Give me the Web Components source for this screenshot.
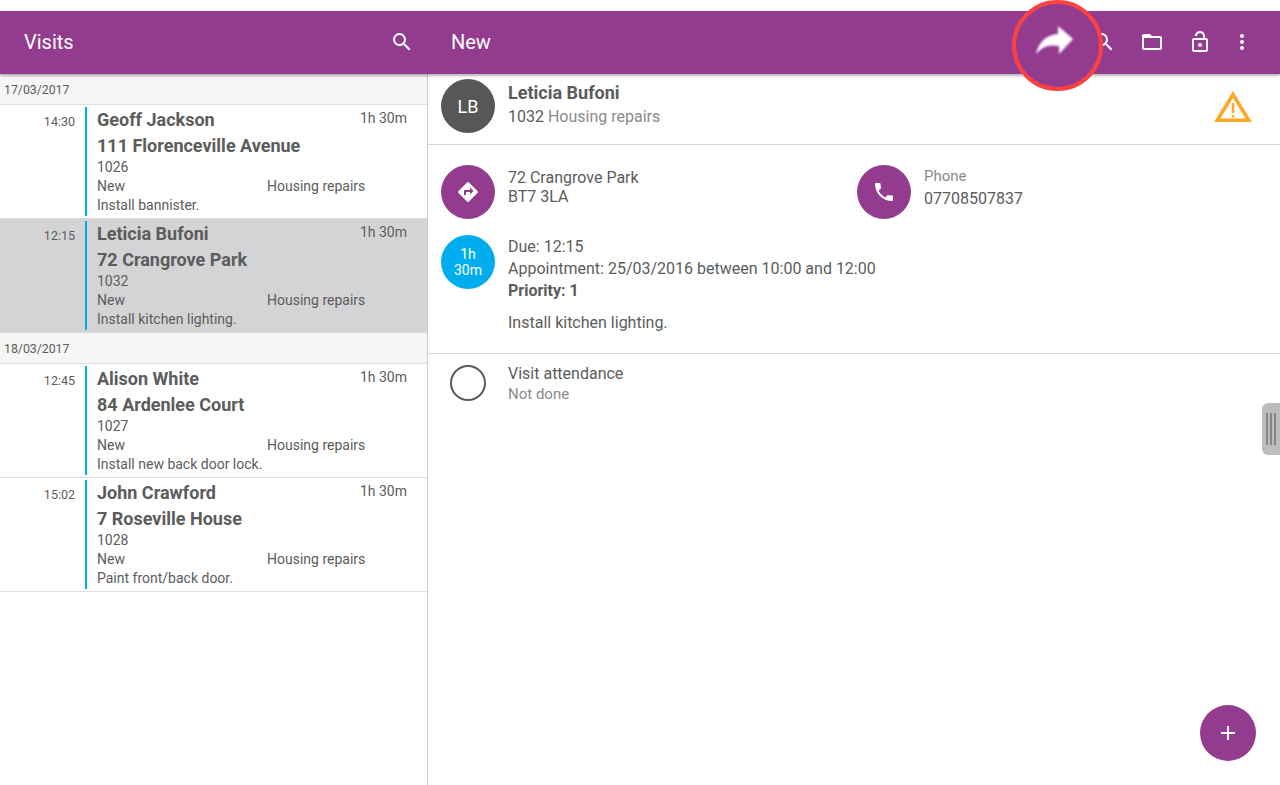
<!DOCTYPE html>
<html>
<head>
<meta charset="utf-8">
<title>Visits</title>
<style>
  html, body { margin: 0; height: 100%; background: #fff; overflow: hidden; }
  body { font-family: Roboto, "Liberation Sans", sans-serif; color: #5c5c5c; }
</style>
</head>
<body>
<visits-app></visits-app>

<script>
const ICONS = {
  search: '<path d="M15.5 14h-.79l-.28-.27A6.47 6.47 0 0 0 16 9.5 6.5 6.5 0 1 0 9.5 16c1.61 0 3.09-.59 4.23-1.57l.27.28v.79l5 4.99L20.49 19l-4.99-5zm-6 0C7.01 14 5 11.99 5 9.5S7.01 5 9.5 5 14 7.01 14 9.5 11.99 14 9.5 14z"/>',
  folder: '<path d="M20 6h-8l-2-2H4c-1.1 0-1.99.9-1.99 2L2 18c0 1.1.9 2 2 2h16c1.1 0 2-.9 2-2V8c0-1.1-.9-2-2-2zm0 12H4V8h16v10z"/>',
  lock: '<path d="M12 17c1.1 0 2-.9 2-2s-.9-2-2-2-2 .9-2 2 .9 2 2 2zm6-9h-1V6c0-2.76-2.24-5-5-5S7 3.24 7 6h1.9c0-1.71 1.39-3.1 3.1-3.1 1.71 0 3.1 1.39 3.1 3.1v2H6c-1.1 0-2 .9-2 2v10c0 1.1.9 2 2 2h12c1.1 0 2-.9 2-2V10c0-1.1-.9-2-2-2zm0 12H6V10h12v10z"/>',
  more: '<path d="M12 8c1.1 0 2-.9 2-2s-.9-2-2-2-2 .9-2 2 .9 2 2 2zm0 2c-1.1 0-2 .9-2 2s.9 2 2 2 2-.9 2-2-.9-2-2-2zm0 6c-1.1 0-2 .9-2 2s.9 2 2 2 2-.9 2-2-.9-2-2-2z"/>',
  directions: '<path d="M21.71 11.29l-9-9a.996.996 0 0 0-1.41 0l-9 9a.996.996 0 0 0 0 1.41l9 9c.39.39 1.02.39 1.41 0l9-9a.996.996 0 0 0 0-1.41zM14 14.5V12h-4v3H8v-4c0-.55.45-1 1-1h5V7.5l3.5 3.5-3.5 3.5z"/>',
  phone: '<path d="M6.62 10.79c1.44 2.83 3.76 5.14 6.59 6.59l2.2-2.2c.27-.27.67-.36 1.02-.24 1.12.37 2.33.57 3.57.57.55 0 1 .45 1 1V20c0 .55-.45 1-1 1-9.39 0-17-7.61-17-17 0-.55.45-1 1-1h3.5c.55 0 1 .45 1 1 0 1.25.2 2.45.57 3.57.11.35.03.74-.25 1.02l-2.2 2.2z"/>',
  add: '<path d="M19 13h-6v6h-2v-6H5v-2h6V5h2v6h6v2z"/>'
};

function icon(name, size) {
  return `<svg width="${size}" height="${size}" viewBox="0 0 24 24" fill="currentColor">${ICONS[name]}</svg>`;
}

class AppBar extends HTMLElement {
  constructor() {
    super();
    this.attachShadow({ mode: "open" }).innerHTML = `
      <style>
        :host { display: flex; position: relative; z-index: 2; height: 63px; margin-top: 11px;
                background: #933b8f; color: #fff; box-shadow: 0 2px 2px rgba(0,0,0,.28); }
        .left { width: 428px; flex: none; display: flex; align-items: center; padding: 0 14px 2px 24px; box-sizing: border-box; }
        .right { flex: 1; display: flex; align-items: center; padding: 0 26px 2px 23px; }
        .title { font-size: 20px; flex: 1; }
        .icons { display: flex; gap: 24px; }
        svg { display: block; }
        .ring { position: absolute; left: 1012px; top: -11px; width: 91px; height: 91px; box-sizing: border-box;
                border: 4px solid #fb4141; border-radius: 50%; background: #933b8f;
                display: flex; align-items: center; justify-content: center; }
        .ring svg { margin: 0 6px 10px 0; filter: blur(.8px); }
      </style>
      <div class="left">
        <span class="title">Visits</span>
        <span style="width:24px">${icon("search", 24)}</span>
      </div>
      <div class="right">
        <span class="title">New</span>
        <span class="icons">
          ${icon("search", 24)}${icon("folder", 24)}${icon("lock", 24)}<span style="margin-left:-6px">${icon("more", 24)}</span>
        </span>
      </div>
      <div class="ring">
        <svg width="37" height="30" viewBox="0 0 37 30"><path fill="#fff" d="M0 28C3 15 11 9 22 8V0l15 13L23 28v-8C12 18 6 21 0 28z"/></svg>
      </div>`;
  }
}

class DateHeader extends HTMLElement {
  constructor() {
    super();
    this.attachShadow({ mode: "open" }).innerHTML = `
      <style>
        :host { display: block; height: 29px; padding: 1px 0 0 4px; line-height: 30px; font-size: 12.3px;
                background: #f6f6f6; border-bottom: 1px solid #ddd; }
      </style><slot></slot>`;
  }
}

class VisitRow extends HTMLElement {
  constructor() {
    super();
    const a = (n) => this.getAttribute(n);
    this.attachShadow({ mode: "open" }).innerHTML = `
      <style>
        :host { display: flex; height: 113px; border-bottom: 1px solid #ddd; box-sizing: content-box; font-size: 14px; }
        :host([selected]) { background: #d4d4d6; }
        .time { width: 75px; flex: none; text-align: right; font-size: 12.5px; padding-top: 9px; line-height: 15px; }
        .body { margin: 2px 0 2px 10px; flex: 1; border-left: 2px solid #00aeef; padding-left: 10px; position: relative; }
        .name { font-size: 18px; font-weight: 700; line-height: 26px; }
        .line { line-height: 19px; }
        .split { display: flex; }
        .split span:first-child { width: 170px; }
        .dur { position: absolute; right: 20px; top: 2px; line-height: 18px; }
      </style>
      <div class="time">${a("time")}</div>
      <div class="body">
        <div class="name">${a("name")}</div>
        <div class="name">${a("address")}</div>
        <div class="line" style="margin-top:-1px">${a("ref")}</div>
        <div class="line split"><span>New</span><span>Housing repairs</span></div>
        <div class="line">${a("note")}</div>
        <div class="dur">1h 30m</div>
      </div>`;
  }
}

class VisitList extends HTMLElement {
  constructor() {
    super();
    this.attachShadow({ mode: "open" }).innerHTML = `
      <style>
        :host { display: block; width: 427px; flex: none; border-right: 1px solid #ccc; }
      </style><slot></slot>`;
  }
}

class RoundBadge extends HTMLElement {
  constructor() {
    super();
    this.attachShadow({ mode: "open" }).innerHTML = `
      <style>
        :host { display: flex; flex: none; width: 54px; height: 54px; border-radius: 50%; align-items: center; justify-content: center;
                background: var(--badge, #933b8f); color: #fff; text-align: center; }
      </style><slot></slot>`;
  }
}

class VisitDetail extends HTMLElement {
  constructor() {
    super();
    this.attachShadow({ mode: "open" }).innerHTML = `
      <style>
        :host { display: block; flex: 1; min-width: 0; position: relative; font-size: 16px; line-height: 22px; }
        svg { display: block; }
        .section { display: flex; gap: 13px; padding-left: 13px; }
        .head { height: 65px; border-bottom: 1px solid #d6d6d6; padding-top: 5px; position: relative; }
        .head b { display: block; font-size: 18px; line-height: 24px; margin: 2px 0 1px; }
        .initials { padding-top: 2px; }
        .muted { color: #8a8a8a; }
        .warn { position: absolute; right: 28px; top: 17px; }
        .contact { padding-top: 20px; }
        .cell { display: flex; gap: 13px; width: 403px; }
        .addr { line-height: 19px; padding-top: 3px; }
        .phone div:first-child { font-size: 15px; }
        .phone div:last-child { margin-top: 1px; }
        .info { padding-top: 16px; height: 118px; border-bottom: 1px solid #d6d6d6; }
        .info p { margin: 10px 0 0; }
        .info > div:last-child { padding-top: 1px; }
        .dur { --badge: #00aeef; font-size: 14px; line-height: 16px; }
        .attend { padding-top: 8px; }
        .check { width: 32px; height: 32px; border: 2px solid #5c5c5c; border-radius: 50%; margin: 3px 9px 0; flex: none; }
        .attend .text { padding-top: 1px; }
        .attend .muted { font-size: 15px; margin-top: -2px; }
        .grip { position: absolute; right: 0; top: 329px; width: 18px; height: 52px; background: #bdbdbd; border-radius: 6px 0 0 6px;
                display: flex; gap: 2px; align-items: center; padding-left: 4px; box-sizing: border-box; }
        .grip i { width: 2px; height: 32px; background: #868686; }
        .fab { position: absolute; right: 24px; bottom: 24px; width: 56px; height: 56px; }
      </style>
      <div class="section head">
        <round-badge style="--badge:#575755;font-size:18px"><span class="initials">LB</span></round-badge>
        <div>
          <b>Leticia Bufoni</b>
          <div>1032 <span class="muted">Housing repairs</span></div>
        </div>
        <svg class="warn" width="38" height="31" viewBox="0 0 38 31">
          <path fill="#ffa726" fill-rule="evenodd" d="M19 0l19 31H0zM19 7L6.5 27.5h25z"/>
          <rect x="17.7" y="12" width="2.6" height="10" fill="#ffa726"/><rect x="17.7" y="24" width="2.6" height="2.4" fill="#ffa726"/>
        </svg>
      </div>
      <div class="section contact">
        <div class="cell">
          <round-badge>${icon("directions", 24)}</round-badge>
          <div class="addr">72 Crangrove Park<br>BT7 3LA</div>
        </div>
        <div class="cell">
          <round-badge>${icon("phone", 24)}</round-badge>
          <div class="phone"><div class="muted">Phone</div><div>07708507837</div></div>
        </div>
      </div>
      <div class="section info">
        <round-badge class="dur"><span>1h<br>30m</span></round-badge>
        <div>
          <div>Due: 12:15</div>
          <div>Appointment: 25/03/2016 between 10:00 and 12:00</div>
          <div><b>Priority: 1</b></div>
          <p>Install kitchen lighting.</p>
        </div>
      </div>
      <div class="section attend">
        <div class="check"></div>
        <div class="text"><div>Visit attendance</div><div class="muted">Not done</div></div>
      </div>
      <div class="grip"><i></i><i></i><i></i></div>
      <round-badge class="fab">${icon("add", 24)}</round-badge>`;
  }
}

class VisitsApp extends HTMLElement {
  constructor() {
    super();
    this.attachShadow({ mode: "open" }).innerHTML = `
      <style>
        :host { display: flex; flex-direction: column; height: 785px; }
        .main { flex: 1; display: flex; min-height: 0; }
      </style>
      <app-bar></app-bar>
      <div class="main">
        <visit-list>
          <date-header>17/03/2017</date-header>
          <visit-row time="14:30" name="Geoff Jackson" address="111 Florenceville Avenue" ref="1026" note="Install bannister."></visit-row>
          <visit-row selected time="12:15" name="Leticia Bufoni" address="72 Crangrove Park" ref="1032" note="Install kitchen lighting."></visit-row>
          <date-header>18/03/2017</date-header>
          <visit-row time="12:45" name="Alison White" address="84 Ardenlee Court" ref="1027" note="Install new back door lock."></visit-row>
          <visit-row time="15:02" name="John Crawford" address="7 Roseville House" ref="1028" note="Paint front/back door."></visit-row>
        </visit-list>
        <visit-detail></visit-detail>
      </div>`;
  }
}

// children first so upgraded markup renders straight away
customElements.define("round-badge", RoundBadge);
customElements.define("date-header", DateHeader);
customElements.define("visit-row", VisitRow);
customElements.define("visit-list", VisitList);
customElements.define("visit-detail", VisitDetail);
customElements.define("app-bar", AppBar);
customElements.define("visits-app", VisitsApp);
</script>
</body>
</html>
